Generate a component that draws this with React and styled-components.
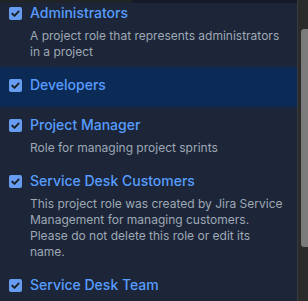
import React from "react";
import styled, { createGlobalStyle } from "styled-components";

const Global = createGlobalStyle`
  html, body { margin: 0; padding: 0; }
  body {
    background: #1c2638;
    font-family: Inter, "Noto Sans", sans-serif;
    overflow: hidden;
  }
`;

const Frame = styled.div`
  width: 308px;
  height: 301px;
  display: flex;
  overflow: hidden;
  background: #1c2638;
`;

const Pane = styled.div`
  flex: 1;
  display: flex;
  flex-direction: column;
  min-width: 0;
`;

const TopEdge = styled.div`
  height: 3px;
  flex: none;
  display: flex;
`;

const EdgePart = styled.div`
  width: ${(p) => p.$w || "auto"};
  flex: ${(p) => (p.$w ? "none" : "1")};
  background: ${(p) => p.$bg};
`;

const List = styled.div`
  display: flex;
  flex-direction: column;
  margin-top: -8px;
`;

const Row = styled.div`
  padding: 8px 10px ${(p) => (p.$hasDesc ? "7px" : "12px")} 9px;
  background: ${(p) => (p.$selected ? "#0c2a56" : "transparent")};
`;

const Head = styled.div`
  display: flex;
  align-items: center;
  gap: 8px;
  height: 20px;
`;

const Box = styled.span`
  width: 13px;
  height: 13px;
  flex: none;
  border-radius: 2px;
  background: #669df1;
  display: flex;
  align-items: center;
  justify-content: center;
`;

const Title = styled.span`
  font-size: 14px;
  font-weight: 500;
  line-height: 20px;
  color: #579dff;
  white-space: nowrap;
`;

const Desc = styled.div`
  margin: 5px 0 0 21px;
  font-size: 12px;
  line-height: 16px;
  color: #9fa8b5;
`;

const Track = styled.div`
  width: 11px;
  flex: none;
  background: #2b2b2c;
  border-left: 1px solid #3a3a3b;
  box-sizing: border-box;
  display: flex;
  justify-content: flex-end;
`;

const Thumb = styled.div`
  width: 7px;
  height: 218px;
  margin-top: 29px;
  background: #7b7b7c;
  border-radius: 3px 0 0 3px;
`;

const Check = () => (
  <svg width="13" height="13" viewBox="0 0 13 13">
    <path d="M3.3 6.7 L5.5 8.8 L9.7 4.4" fill="none" stroke="#1d2125" strokeWidth="1.9" strokeLinecap="round" strokeLinejoin="round" />
  </svg>
);

const roles = [
  { title: "Administrators", desc: "A project role that represents administrators in a project" },
  { title: "Developers", selected: true },
  { title: "Project Manager", desc: "Role for managing project sprints" },
  {
    title: "Service Desk Customers",
    desc: "This project role was created by Jira Service Management for managing customers. Please do not delete this role or edit its name.",
  },
  { title: "Service Desk Team" },
];

export default function App() {
  return (
    <>
      <Global />
      <Frame>
        <Pane>
          <TopEdge>
            <EdgePart $w="132px" $bg="#202429" />
            <EdgePart $bg="#151b26" />
          </TopEdge>
          <List>
            {roles.map((r) => (
              <Row key={r.title} $selected={r.selected} $hasDesc={!!r.desc}>
                <Head>
                  <Box>
                    <Check />
                  </Box>
                  <Title>{r.title}</Title>
                </Head>
                {r.desc && <Desc>{r.desc}</Desc>}
              </Row>
            ))}
          </List>
        </Pane>
        <Track>
          <Thumb />
        </Track>
      </Frame>
    </>
  );
}
